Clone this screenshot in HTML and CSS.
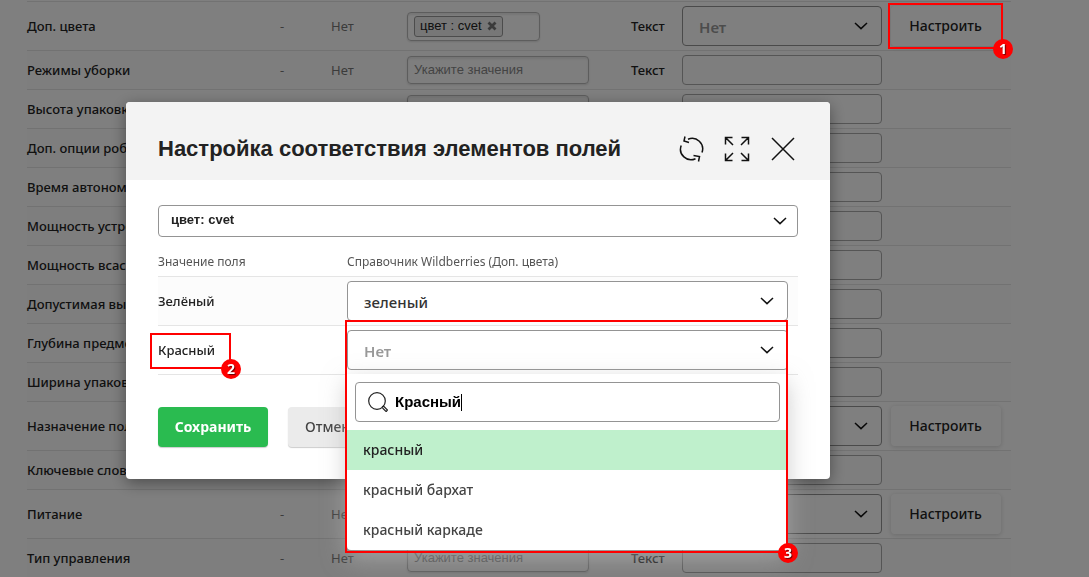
FILE: index.html
```
<!DOCTYPE html>
<html lang="ru">
<head>
<meta charset="utf-8">
<title>Настройка соответствия элементов полей</title>
<link rel="stylesheet" href="styles.css">
</head>
<body>
<svg class="sprite" aria-hidden="true">
  <symbol id="chevron" viewBox="0 0 14 8"><path d="M1 1L7 6.600L13 1" fill="none" stroke="#111" stroke-width="1.5"/></symbol>
</svg>

<main class="page">
<table class="fields">
  <colgroup><col class="c-name"><col class="c-code"><col class="c-set"><col class="c-value"><col class="c-type"><col class="c-target"><col></colgroup>
  <tbody>
    <tr class="tall"><td>Доп. цвета</td><td class="muted">-</td><td class="muted">Нет</td>
      <td><div class="tags"><span class="tag">цвет : cvet<button class="tag-x" aria-label="Удалить"><svg viewBox="0 0 10 10"><path d="M1.500 1.500L8.500 8.500M8.500 1.500L1.500 8.500" stroke="#777" stroke-width="2.800"/></svg></button></span></div></td>
      <td>Текст</td>
      <td><div class="pick"><select class="select" aria-label="Доп. цвета"><option>Нет</option></select><svg class="chev"><use href="#chevron"/></svg></div></td>
      <td class="act"><button class="btn-plain">Настроить</button><div class="mark mark-1"><span class="num">1</span></div></td></tr>
    <tr><td>Режимы уборки</td><td class="muted">-</td><td class="muted">Нет</td><td><input class="values" placeholder="Укажите значения" aria-label="Режимы уборки, значения"></td><td>Текст</td><td><input class="text" aria-label="Режимы уборки"></td><td></td></tr>
    <tr><td>Высота упаковки</td><td></td><td></td><td><input class="values" aria-label="Высота упаковки, значения"></td><td></td><td><input class="text" aria-label="Высота упаковки"></td><td></td></tr>
    <tr><td>Доп. опции робота</td><td></td><td></td><td><input class="values" aria-label="Доп. опции, значения"></td><td></td><td><input class="text" aria-label="Доп. опции"></td><td></td></tr>
    <tr><td>Время автономной</td><td></td><td></td><td><input class="values" aria-label="Время автономной работы, значения"></td><td></td><td><input class="text" aria-label="Время автономной работы"></td><td></td></tr>
    <tr><td>Мощность устройства</td><td></td><td></td><td><input class="values" aria-label="Мощность устройства, значения"></td><td></td><td><input class="text" aria-label="Мощность устройства"></td><td></td></tr>
    <tr><td>Мощность всасывания</td><td></td><td></td><td><input class="values" aria-label="Мощность всасывания, значения"></td><td></td><td><input class="text" aria-label="Мощность всасывания"></td><td></td></tr>
    <tr><td>Допустимая высота</td><td></td><td></td><td><input class="values" aria-label="Допустимая высота, значения"></td><td></td><td><input class="text" aria-label="Допустимая высота"></td><td></td></tr>
    <tr><td>Глубина предмета</td><td></td><td></td><td><input class="values" aria-label="Глубина предмета, значения"></td><td></td><td><input class="text" aria-label="Глубина предмета"></td><td></td></tr>
    <tr><td>Ширина упаковки</td><td></td><td></td><td><input class="values" aria-label="Ширина упаковки, значения"></td><td></td><td><input class="text" aria-label="Ширина упаковки"></td><td></td></tr>
    <tr class="tall"><td>Назначение пола</td><td></td><td></td><td><input class="values" aria-label="Назначение, значения"></td><td></td>
      <td><div class="pick"><select class="select" aria-label="Назначение"><option></option></select><svg class="chev"><use href="#chevron"/></svg></div></td><td class="act"><button class="btn-plain">Настроить</button></td></tr>
    <tr><td>Ключевые слова</td><td></td><td></td><td><input class="values" aria-label="Ключевые слова, значения"></td><td></td><td><input class="text" aria-label="Ключевые слова"></td><td></td></tr>
    <tr class="tall"><td>Питание</td><td class="muted">-</td><td class="muted">Нет</td><td><input class="values" aria-label="Питание, значения"></td><td></td>
      <td><div class="pick"><select class="select" aria-label="Питание"><option></option></select><svg class="chev"><use href="#chevron"/></svg></div></td><td class="act"><button class="btn-plain">Настроить</button></td></tr>
    <tr><td>Тип управления</td><td class="muted">-</td><td class="muted">Нет</td><td><input class="values" placeholder="Укажите значения" aria-label="Тип управления, значения"></td><td>Текст</td><td><input class="text" aria-label="Тип управления"></td><td></td></tr>
  </tbody>
</table>
</main>

<div class="overlay">
  <section class="modal" role="dialog" aria-labelledby="modal-title">
    <header class="modal-head">
      <h1 id="modal-title">Настройка соответствия элементов полей</h1>
      <div class="tools">
        <button aria-label="Обновить"><svg viewBox="0 0 26 26"><path d="M10 3.300A10.500 10.500 0 0 1 24 16.500M3.200 9.500A10.500 10.500 0 0 0 17.500 22.700M7 0.500L6 5L11 6.500M15.500 19.500L21.500 20.500L20.500 25.500"/></svg></button>
        <button aria-label="Развернуть"><svg viewBox="0 0 26 26"><path d="M1.500 8.500V1.500H8.500M1.500 1.500L9 9M17.500 1.500H24.500V8.500M24.500 1.500L17 9M1.500 17.500V24.500H8.500M1.500 24.500L9 17M17.500 24.500H24.500V17.500M24.500 24.500L17 17"/></svg></button>
        <button aria-label="Закрыть"><svg viewBox="0 0 26 26"><path d="M2 2L24 24M24 2L2 24"/></svg></button>
      </div>
    </header>
    <div class="modal-body">
      <div class="pick"><select class="select field-select" aria-label="Поле"><option>цвет: cvet</option></select><svg class="chev"><use href="#chevron"/></svg></div>
      <table class="match">
        <thead><tr><th>Значение поля</th><th>Справочник Wildberries (Доп. цвета)</th></tr></thead>
        <tbody>
          <tr><td>Зелёный</td><td><div class="pick"><select class="select chosen" aria-label="Зелёный"><option>зеленый</option></select><svg class="chev"><use href="#chevron"/></svg></div></td></tr>
          <tr><td><span class="marked">Красный<span class="mark mark-2"><span class="num">2</span></span></span></td>
            <td><div class="pick open"><select class="select" aria-label="Красный"><option>Нет</option></select><svg class="chev"><use href="#chevron"/></svg>
              <div class="dropdown">
                <label class="search"><svg viewBox="0 0 20 20"><circle cx="9" cy="9" r="8.300"/><path d="M14 15L15.500 14L19.500 18L18.200 19.600L14.500 16"/></svg><span class="entry"><input value="Красный" aria-label="Поиск" autofocus><span class="caret"></span></span></label>
                <ul role="listbox"><li class="active" role="option">красный</li><li role="option">красный бархат</li><li role="option">красный каркаде</li></ul>
              </div>
              <div class="mark mark-3"><span class="num">3</span></div>
            </div></td></tr>
        </tbody>
      </table>
      <div class="buttons"><button class="btn-save">Сохранить</button><button class="btn-cancel">Отменить</button></div>
    </div>
  </section>
</div>
</body>
</html>
```
FILE: styles.css
```
* { box-sizing: border-box; }
html, body { height: 100%; }
body { margin: 0; overflow: hidden; background: #fff; color: #222; font: 500 13px/18px "Noto Sans", "Open Sans", sans-serif; }
button, input, select { font: inherit; color: inherit; }
button { cursor: pointer; }
.sprite { position: absolute; width: 0; height: 0; }

.page { padding: 1px 78px 0 27px; }
.fields { width: 100%; table-layout: fixed; border-collapse: separate; border-spacing: 0; border-top: 1px solid #e5e5e5; }
.c-name { width: 253px; }
.c-code { width: 51px; }
.c-set { width: 76px; }
.c-value { width: 224px; }
.c-type { width: 51px; }
.c-target { width: 209px; }
.fields td { height: 39px; padding: 0; border-bottom: 1px solid #e5e5e5; white-space: nowrap; }
.fields .tall td { height: 49px; }
.fields tr:nth-child(even) td { background: #fcfcfc; }
.fields .muted { color: #777; font-weight: 400; }

.values, .tags, .text { display: block; border: 1px solid #bbb; border-radius: 4px; background: transparent; }
.values { width: 182px; height: 28px; padding: 0 6px 2px; font: 400 13px/16px "Liberation Sans", Arial, sans-serif; box-shadow: inset 0 2px 2px rgba(0,0,0,.08), 0 1px 2px rgba(0,0,0,.12); }
.values::placeholder { color: #888; }
.text { width: 200px; height: 30px; border-color: #aaa; }
.tags { display: flex; align-items: center; width: 133px; height: 29px; padding: 0 6px; box-shadow: inset 0 2px 2px rgba(0,0,0,.08), 0 1px 2px rgba(0,0,0,.12); }
.tag { display: flex; align-items: center; gap: 5px; height: 21px; padding: 0 5px; border: 1px solid #999; border-radius: 3px; background: #eee; font: 400 13px/16px "Liberation Sans", Arial, sans-serif; }
.tag-x { display: flex; padding: 0; border: 0; background: none; }
.tag-x svg { width: 10px; height: 10px; }

.pick { position: relative; }
.fields .pick { width: 200px; }
.select { appearance: none; display: block; width: 100%; height: 40px; padding: 2px 40px 0 16px; border: 1px solid #949494; border-radius: 4px; background: #fff; font-size: 15px; font-weight: 600; color: #999; }
.chev { position: absolute; top: 16px; right: 14px; width: 14px; height: 8px; pointer-events: none; }
.chosen { color: #333; font-weight: 500; }
.act { position: relative; }
.btn-plain { display: block; width: 110px; height: 40px; padding: 0 1px 0 0; border: 0; border-radius: 4px; background: #fff; font-size: 14px; box-shadow: 0 1px 5px rgba(0,0,0,.16); }

.overlay { position: fixed; inset: 0; padding: 102px 32px 0 126px; background: rgba(0,0,0,.5); }
.modal { max-width: 704px; border-radius: 4px; background: #fff; box-shadow: 0 4px 16px rgba(0,0,0,.4); }
.modal-head { display: flex; align-items: center; justify-content: space-between; height: 78px; padding: 16px 34px 0 32px; border-radius: 4px 4px 0 0; background: #f3f3f3; }
h1 { margin: 0; font: 700 22px/28px "Liberation Sans", Arial, sans-serif; }
.tools { display: flex; gap: 20px; }
.tools button { display: flex; padding: 0; border: 0; background: none; }
.tools svg { width: 26px; height: 26px; fill: none; stroke: #111; stroke-width: 1.5; }
.modal-body { padding: 25px 32px 32px; }
.field-select { height: 32px; padding: 0 40px 3px 12px; font: 700 13px/16px "Liberation Sans", Arial, sans-serif; color: #222; }
.field-select + .chev { top: 12px; right: 11px; }

.match { width: 100%; margin-top: 10px; table-layout: fixed; border-collapse: separate; border-spacing: 0; }
.match th { height: 30px; padding: 0; border-bottom: 1px solid #e5e5e5; text-align: left; font-size: 12px; font-weight: 400; color: #555; }
.match th:first-child { width: 189px; }
.match td { height: 49px; padding: 4px 10px 4px 0; border-bottom: 1px solid #e5e5e5; }
.match tbody tr:first-child td { background: #fcfcfc; }
.marked { position: relative; }

.dropdown { position: absolute; z-index: 2; top: 44px; left: 0; right: 1px; border-radius: 0 0 4px 4px; background: #fff; box-shadow: 0 8px 24px rgba(180,180,180,.7); }
.search { display: flex; align-items: center; gap: 7px; height: 40px; margin: 8px 7px 8px 8px; padding: 0 12px; border: 1px solid #949494; border-radius: 4px; }
.search svg { width: 20px; height: 20px; fill: none; stroke: #222; stroke-width: 1.2; }
.entry { display: flex; align-items: center; flex: 1; min-width: 0; }
.search input { field-sizing: content; padding: 0; border: 0; outline: 0; background: none; caret-color: transparent; font: 700 15px/20px "Liberation Sans", Arial, sans-serif; color: #000; }
.caret { width: 1px; height: 17px; background: #000; }
ul { margin: 0; padding: 0; list-style: none; }
li { height: 40px; padding: 0 16px; font-size: 14px; line-height: 40px; color: #444; }
.active { background: #bff0cc; color: #222; }

.buttons { display: flex; gap: 20px; margin-top: 32px; }
.btn-save, .btn-cancel { height: 40px; padding: 0 17px; border: 0; border-radius: 4px; font-size: 14px; box-shadow: 0 1px 1px rgba(0,0,0,.2); }
.btn-save { width: 110px; padding: 0; background: #2abb50; color: #fff; font-weight: 700; }
.btn-cancel { background: #ebebeb; color: #444; }

.mark { position: absolute; z-index: 5; border: 2px solid #f00; pointer-events: none; }
.mark-1 { inset: 1px 8px 1px -3px; }
.mark-2 { inset: -8px -16px -10px -8px; }
.mark-3 { z-index: 6; top: -10px; left: -2px; right: 0; height: 233px; }
.num { position: absolute; right: -12px; bottom: -12px; width: 20px; height: 20px; border-radius: 50%; background: #f00; color: #fff; font: 700 14px/20px "Noto Sans", sans-serif; text-align: center; text-shadow: 1px 1px 1px #600; }
```
